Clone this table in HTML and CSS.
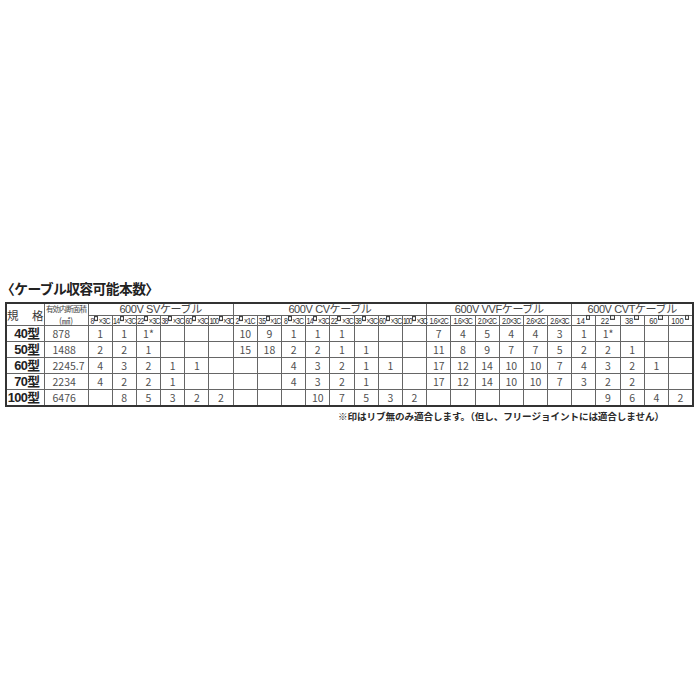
FILE: index.html
```html
<!DOCTYPE html>
<html lang="ja">
<head>
<meta charset="utf-8">
<title>ケーブル収容可能本数</title>
<link rel="stylesheet" href="styles.css">
</head>
<body>
<div class="page">
  <h2 class="title">〈ケーブル収容可能本数〉</h2>
  <table class="spec">
    <colgroup>
      <col class="c-name"><col class="c-area">
      <col><col><col><col><col><col>
      <col><col><col><col><col><col><col><col>
      <col><col><col><col><col><col>
      <col><col><col><col><col>
    </colgroup>
    <thead>
      <tr class="h1">
        <th rowspan="2" class="name-h">規　格</th>
        <th rowspan="2" class="area-h"><span class="area-t">有効内断面積</span><span class="area-u">(㎟)</span></th>
        <th colspan="6" class="grp">600V SVケーブル</th>
        <th colspan="8" class="grp">600V CVケーブル</th>
        <th colspan="6" class="grp">600V VVFケーブル</th>
        <th colspan="5" class="grp">600V CVTケーブル</th>
      </tr>
      <tr class="h2">
        <th class="sub"><span>8<i class="sq"></i>×3C</span></th>
        <th class="sub"><span>14<i class="sq"></i>×3C</span></th>
        <th class="sub"><span>22<i class="sq"></i>×3C</span></th>
        <th class="sub"><span>38<i class="sq"></i>×3C</span></th>
        <th class="sub"><span>60<i class="sq"></i>×3C</span></th>
        <th class="sub wide"><span>100<i class="sq"></i>×3C</span></th>
        <th class="sub"><span>2<i class="sq"></i>×1C</span></th>
        <th class="sub wide"><span>3.5<i class="sq"></i>×1C</span></th>
        <th class="sub"><span>8<i class="sq"></i>×3C</span></th>
        <th class="sub"><span>14<i class="sq"></i>×3C</span></th>
        <th class="sub"><span>22<i class="sq"></i>×3C</span></th>
        <th class="sub"><span>38<i class="sq"></i>×3C</span></th>
        <th class="sub"><span>60<i class="sq"></i>×3C</span></th>
        <th class="sub wide"><span>100<i class="sq"></i>×3C</span></th>
        <th class="sub"><span>1.6×2C</span></th>
        <th class="sub"><span>1.6×3C</span></th>
        <th class="sub"><span>2.0×2C</span></th>
        <th class="sub"><span>2.0×3C</span></th>
        <th class="sub"><span>2.6×2C</span></th>
        <th class="sub"><span>2.6×3C</span></th>
        <th class="sub cvt"><span>14<i class="sq"></i></span></th>
        <th class="sub cvt"><span>22<i class="sq"></i></span></th>
        <th class="sub cvt"><span>38<i class="sq"></i></span></th>
        <th class="sub cvt"><span>60<i class="sq"></i></span></th>
        <th class="sub cvt"><span>100<i class="sq"></i></span></th>
      </tr>
    </thead>
    <tbody>
      <tr>
        <th class="name">40型</th><td class="area">878</td>
        <td>1</td><td>1</td><td>1*</td><td></td><td></td><td></td>
        <td>10</td><td>9</td><td>1</td><td>1</td><td>1</td><td></td><td></td><td></td>
        <td>7</td><td>4</td><td>5</td><td>4</td><td>4</td><td>3</td>
        <td>1</td><td>1*</td><td></td><td></td><td></td>
      </tr>
      <tr>
        <th class="name">50型</th><td class="area">1488</td>
        <td>2</td><td>2</td><td>1</td><td></td><td></td><td></td>
        <td>15</td><td>18</td><td>2</td><td>2</td><td>1</td><td>1</td><td></td><td></td>
        <td>11</td><td>8</td><td>9</td><td>7</td><td>7</td><td>5</td>
        <td>2</td><td>2</td><td>1</td><td></td><td></td>
      </tr>
      <tr>
        <th class="name">60型</th><td class="area">2245.7</td>
        <td>4</td><td>3</td><td>2</td><td>1</td><td>1</td><td></td>
        <td></td><td></td><td>4</td><td>3</td><td>2</td><td>1</td><td>1</td><td></td>
        <td>17</td><td>12</td><td>14</td><td>10</td><td>10</td><td>7</td>
        <td>4</td><td>3</td><td>2</td><td>1</td><td></td>
      </tr>
      <tr>
        <th class="name">70型</th><td class="area">2234</td>
        <td>4</td><td>2</td><td>2</td><td>1</td><td></td><td></td>
        <td></td><td></td><td>4</td><td>3</td><td>2</td><td>1</td><td></td><td></td>
        <td>17</td><td>12</td><td>14</td><td>10</td><td>10</td><td>7</td>
        <td>3</td><td>2</td><td>2</td><td></td><td></td>
      </tr>
      <tr>
        <th class="name">100型</th><td class="area">6476</td>
        <td></td><td>8</td><td>5</td><td>3</td><td>2</td><td>2</td>
        <td></td><td></td><td></td><td>10</td><td>7</td><td>5</td><td>3</td><td>2</td>
        <td></td><td></td><td></td><td></td><td></td><td></td>
        <td></td><td>9</td><td>6</td><td>4</td><td>2</td>
      </tr>
    </tbody>
  </table>
  <p class="note">※印はリブ無のみ適合します。（但し、フリージョイントには適合しません）</p>
</div>
</body>
</html>
```

FILE: styles.css
```css
html, body {
  margin: 0;
  padding: 0;
  background: #ffffff;
}

body {
  font-family: "Noto Sans CJK JP", "Liberation Sans", sans-serif;
  color: #333333;
}

.page {
  width: 700px;
  padding: 280px 0 0 5px;
  box-sizing: border-box;
}

.title {
  margin: 0 0 6px -4px;
  font-size: 13.8px;
  line-height: 16px;
  font-weight: 700;
  color: #222222;
  letter-spacing: -0.6px;
}

.spec {
  width: 689px;
  table-layout: fixed;
  border-collapse: collapse;
  border: 2px solid #333333;
}

.c-name { width: 38px; }
.c-area { width: 44px; }

.spec th,
.spec td {
  border: 1px solid #666666;
  padding: 0;
  text-align: center;
  vertical-align: middle;
  white-space: nowrap;
}

.h1 th {
  height: 10px;
  line-height: 10px;
}

.spec .grp {
  font-family: "Liberation Sans", "Noto Sans CJK JP", sans-serif;
  font-size: 11px;
  font-weight: 400;
  letter-spacing: -0.4px;
  color: #444444;
  padding-bottom: 1px;
  height: 9px;
}

.name-h {
  font-size: 11.5px;
  font-weight: 400;
  color: #3a3a3a;
  letter-spacing: 1px;
}

.area-h {
  line-height: 9px;
  font-weight: 400;
  color: #444444;
}

.area-t {
  display: block;
  font-size: 7.5px;
  letter-spacing: -0.8px;
}

.area-u {
  display: block;
  font-size: 8.5px;
  margin-top: 1px;
}

.h2 th {
  height: 9px;
  line-height: 9px;
}

.sub {
  font-family: "Liberation Sans", "Noto Sans CJK JP", sans-serif;
  font-weight: 400;
  font-size: 7px;
  letter-spacing: -0.7px;
  color: #2e2e2e;
}

.sub.wide {
  letter-spacing: -1px;
}

.sub span {
  display: inline-block;
  line-height: 7px;
  transform: scaleY(1.3);
}

.sub.cvt {
  font-size: 7.5px;
  letter-spacing: 0;
}

.sub.cvt span {
  transform: scaleY(1.25);
}

.sq {
  display: inline-block;
  width: 2px;
  height: 2px;
  border: 0.6px solid #444444;
  margin: 0 0.8px 0 0.4px;
  vertical-align: 2.5px;
}

.cvt .sq {
  width: 2.4px;
  height: 2.4px;
  margin-left: 1px;
  vertical-align: 3px;
}

.spec tbody td,
.spec tbody th {
  height: 15px;
  line-height: 14px;
}

.spec tbody td {
  font-size: 10.5px;
  font-weight: 400;
  color: #505050;
}

.spec tbody th.name {
  text-align: right;
  padding-right: 4px;
  font-family: "Liberation Sans", "Noto Sans CJK JP", sans-serif;
  font-size: 12.8px;
  font-weight: 700;
  color: #222222;
  letter-spacing: -0.6px;
}

.spec tbody td.area {
  text-align: left;
  padding-left: 8px;
}

.note {
  margin: 3px 0 0 333px;
  font-size: 9.6px;
  line-height: 12px;
  font-weight: 700;
  color: #2a2a2a;
  white-space: nowrap;
  letter-spacing: -0.1px;
}
```
